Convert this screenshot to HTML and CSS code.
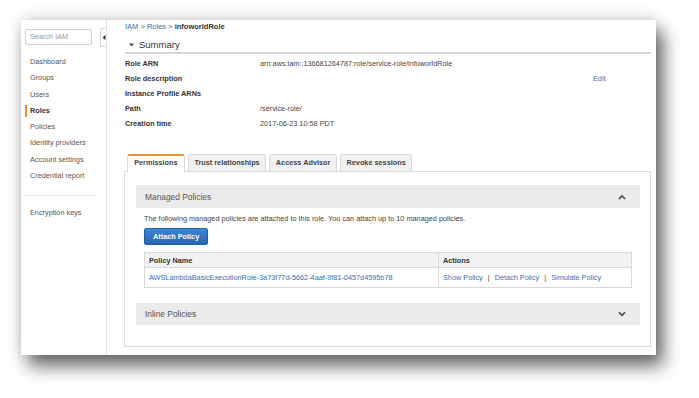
FILE: index.html
```html
<!DOCTYPE html>
<html>
<head>
<meta charset="utf-8">
<link rel="stylesheet" href="styles.css">
</head>
<body>
<div class="window">
  <aside class="sidebar">
    <div class="search">Search IAM</div>
    <div class="collapse"><svg width="4" height="5" viewBox="0 0 4 5"><path d="M3.5 0 L0.5 2.5 L3.5 5 Z" fill="#333"/></svg></div>
    <nav class="nav">
      <div class="nav-item">Dashboard</div>
      <div class="nav-item">Groups</div>
      <div class="nav-item">Users</div>
      <div class="nav-item active">Roles</div>
      <div class="nav-item">Policies</div>
      <div class="nav-item">Identity providers</div>
      <div class="nav-item">Account settings</div>
      <div class="nav-item">Credential report</div>
    </nav>
    <div class="sep"></div>
    <div class="nav-item">Encryption keys</div>
  </aside>
  <main class="main">
    <div class="crumbs"><span class="link">IAM</span> &gt; <span class="link">Roles</span> &gt; <b>infoworldRole</b></div>
    <div class="summary-title"><svg class="tri" width="5" height="4" viewBox="0 0 5 4"><path d="M0 0.5 L5 0.5 L2.5 3.5 Z" fill="#444"/></svg>Summary</div>
    <div class="props">
      <div class="lbl">Role ARN</div><div class="val">arn:aws:iam::136681264787:role/service-role/infoworldRole</div><div></div>
      <div class="lbl">Role description</div><div class="val"></div><div class="link">Edit</div>
      <div class="lbl">Instance Profile ARNs</div><div class="val"></div><div></div>
      <div class="lbl">Path</div><div class="val">/service-role/</div><div></div>
      <div class="lbl">Creation time</div><div class="val">2017-06-23 10:58 PDT</div><div></div>
    </div>
    <div class="tabs">
      <div class="tab active">Permissions</div>
      <div class="tab">Trust relationships</div>
      <div class="tab">Access Advisor</div>
      <div class="tab">Revoke sessions</div>
    </div>
    <div class="panel">
      <section class="acc">
        <div class="acc-head"><span>Managed Policies</span><svg width="8" height="6" viewBox="0 0 8 6"><path d="M1 5 L4 1.8 L7 5" fill="none" stroke="#444" stroke-width="1.6"/></svg></div>
        <div class="acc-body">
          <div class="note">The following managed policies are attached to this role. You can attach up to 10 managed policies.</div>
          <div class="btn">Attach Policy</div>
          <table class="tbl">
            <tr class="th"><td class="c1">Policy Name</td><td>Actions</td></tr>
            <tr class="tr"><td class="c1 link">AWSLambdaBasicExecutionRole-3a73f77d-5662-4aaf-9f81-0457d4595b78</td><td><span class="link">Show Policy</span><span class="bar">|</span><span class="link">Detach Policy</span><span class="bar">|</span><span class="link">Simulate Policy</span></td></tr>
          </table>
        </div>
      </section>
      <section class="acc">
        <div class="acc-head inline"><span>Inline Policies</span><svg width="8" height="6" viewBox="0 0 8 6"><path d="M1 1.2 L4 4.4 L7 1.2" fill="none" stroke="#444" stroke-width="1.6"/></svg></div>
      </section>
    </div>
  </main>
</div>
</body>
</html>
```

FILE: styles.css
```css
html, body {
  margin: 0;
  padding: 0;
  background: #fff;
}
body {
  font-family: "Liberation Sans", Arial, sans-serif;
  font-size: 7.3px;
  color: #444;
  width: 699px;
  height: 398px;
  overflow: hidden;
}
.window {
  margin: 20px 0 0 21px;
  width: 635px;
  height: 335px;
  background: #fff;
  display: flex;
  box-shadow: 7px 11px 17px rgba(0,0,0,0.6), 0 -3px 14px rgba(0,0,0,0.12);
}
.sidebar {
  position: relative;
  width: 81px;
  padding: 9px 0 0 4px;
  border-right: 1px solid #e2e2e2;
  flex: none;
}
.search {
  box-sizing: border-box;
  width: 67px;
  height: 16px;
  border: 1px solid #d0d0d0;
  border-radius: 2px;
  padding-left: 4px;
  line-height: 14px;
  color: #9a9a9a;
}
.collapse {
  position: absolute;
  right: 0;
  top: 8px;
  width: 5px;
  height: 17px;
  border: 1px solid #d6d6d6;
  border-right: none;
  border-radius: 2px 0 0 2px;
  background: #fff;
  display: flex;
  align-items: center;
  justify-content: center;
}
.nav {
  margin-top: 9px;
}
.nav-item {
  line-height: 16.3px;
  padding-left: 5px;
  color: #555;
}
.nav-item.active {
  font-weight: bold;
  color: #333;
  background: linear-gradient(#e8912d, #e8912d) no-repeat 0 50% / 2px 12px;
}
.sep {
  margin: 11px 0 9px -1px;
  width: 73px;
  border-top: 1px solid #e0e0e0;
}
.main {
  flex: 1;
  padding: 0 5px 0 17px;
  min-width: 0;
}
.link {
  color: #2f72b9;
}
.crumbs {
  line-height: 14px;
  margin-left: 1px;
  font-size: 7.5px;
  color: #555;
}
.crumbs b {
  color: #333;
}
.summary-title {
  margin: 4px 0 0 1px;
  line-height: 14px;
  font-size: 9.5px;
  color: #333;
  border-bottom: 2px solid #d6d6d6;
  display: flex;
  align-items: center;
}
.tri {
  margin: 0 5px 0 4px;
}
.props {
  margin: 2px 0 0 1px;
  display: grid;
  grid-template-columns: 135px 333px 1fr;
  line-height: 15px;
}
.lbl {
  font-weight: bold;
  color: #333;
}
.tabs {
  margin: 23px 0 0 3px;
  display: flex;
  gap: 3px;
  position: relative;
  z-index: 1;
}
.tab {
  box-sizing: border-box;
  height: 17px;
  line-height: 15px;
  padding: 0 5.6px;
  font-weight: bold;
  color: #444;
  background: #f1f1f1;
  border: 1px solid #dadada;
  border-bottom: none;
  border-radius: 3px 3px 0 0;
}
.tab.active {
  background: #fff;
  border-top: 2px solid #e8912d;
  line-height: 14px;
  height: 18px;
  margin-bottom: -1px;
  padding: 0 6.2px;
}
.panel {
  border: 1px solid #dcdcdc;
  padding: 13px 10px 21px 11px;
}
.acc-head {
  height: 23px;
  background: #ebebeb;
  padding: 0 14px 0 9px;
  display: flex;
  align-items: center;
  justify-content: space-between;
  font-size: 8.4px;
  color: #555;
}
.acc-head.inline {
  height: 22px;
}
.acc-body {
  padding: 4px 8px 15px 8px;
}
.note {
  line-height: 14px;
  color: #444;
}
.btn {
  display: inline-block;
  box-sizing: border-box;
  margin-top: 2px;
  height: 17px;
  line-height: 15px;
  padding: 0 8px;
  color: #fff;
  font-weight: bold;
  background: linear-gradient(#3f86d4, #2765b3);
  border: 1px solid #225ea7;
  border-radius: 2px;
}
.tbl {
  margin-top: 7px;
  width: 100%;
  border-collapse: collapse;
  font-size: 7.3px;
}
.tbl td {
  border: 1px solid #d8d8d8;
  padding: 0 0 0 4px;
}
.tbl .c1 {
  width: 289px;
}
.th td {
  height: 14px;
  background: #f2f2f2;
  font-weight: bold;
  color: #333;
}
.tr td {
  height: 19px;
}
.bar {
  margin: 0 5px;
  color: #444;
}
```
